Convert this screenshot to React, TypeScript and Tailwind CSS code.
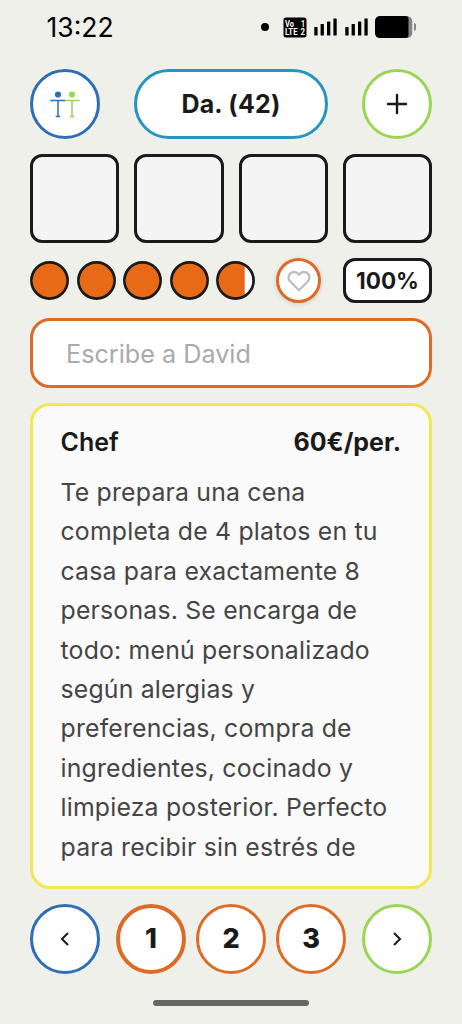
import type { ReactNode } from 'react';
import clsx from 'clsx';

const RATING = [100, 100, 100, 100, 78];
const PAGES = [1, 2, 3];

const DESCRIPTION =
  'Te prepara una cena completa de 4 platos en tu casa para exactamente 8 personas. Se encarga de todo: menú personalizado según alergias y preferencias, compra de ingredientes, cocinado y limpieza posterior. Perfecto para recibir sin estrés de';

function RoundButton({ label, className, children }: { label: string; className: string; children: ReactNode }) {
  return (
    <button
      aria-label={label}
      className={clsx('flex size-[70px] shrink-0 items-center justify-center rounded-full bg-white text-[#1a1a1a]', className)}
    >
      {children}
    </button>
  );
}

function Signal() {
  return (
    <svg width="23" height="18" viewBox="0 0 23 18" fill="#000">
      <rect x="0.3" y="9" width="3.3" height="8.5" rx="0.6" />
      <rect x="6.6" y="6" width="3.3" height="11.5" rx="0.6" />
      <rect x="13" y="3.6" width="3.3" height="13.9" rx="0.6" />
      <rect x="19.4" y="0.4" width="3.3" height="17.1" rx="0.6" />
    </svg>
  );
}

function StatusBar() {
  return (
    <div className="flex h-[54px] items-center px-[46px] text-black">
      <span className="pl-[0.5px] text-[26.5px] leading-[30px]">13:22</span>
      <div className="ml-auto flex items-center">
        <span className="mr-[14px] size-2 rounded-full bg-black" />
        <svg width="24" height="21" viewBox="0 0 24 21" className="mr-[7px] font-['Roboto',sans-serif] text-[9px] font-bold" fill="#fff">
          <rect x="0.5" y="0.5" width="23" height="20" rx="2.5" fill="#000" />
          <text x="2" y="9.5" textLength="9" lengthAdjust="spacingAndGlyphs">Vo</text>
          <text x="18" y="9.5" textLength="4" lengthAdjust="spacingAndGlyphs">1</text>
          <text x="2" y="18" textLength="12.500" lengthAdjust="spacingAndGlyphs">LTE</text>
          <text x="17.500" y="18" textLength="4.500" lengthAdjust="spacingAndGlyphs">2</text>
        </svg>
        <div className="mr-[7px] flex gap-[8px]">
          <Signal />
          <Signal />
        </div>
        <svg width="41" height="22" viewBox="0 0 41 22">
          <rect width="37.3" height="22" rx="5.5" fill="#858585" />
          <path d="M5.5 0H30.5Q33.5 0 33.5 3V19Q33.5 22 30.5 22H5.5Q0 22 0 16.5V5.5Q0 0 5.5 0Z" fill="#000" />
          <path d="M39 7Q41 7.5 41 9V13Q41 14.500 39 15Z" fill="#858585" />
        </svg>
      </div>
    </div>
  );
}

function PeopleIcon() {
  return (
    <svg width="30" height="28" viewBox="0 0 30 28">
      <g fill="#2f6db5" stroke="#2f6db5">
        <circle cx="8" cy="4.5" r="3.1" stroke="none" />
        <path d="M0.300 10.500H15M8 10.500V26.500M5.800 26.500H10.200" fill="none" strokeWidth="1.500" />
      </g>
      <g fill="#9bd555" stroke="#9bd555">
        <circle cx="22" cy="4.5" r="3.1" stroke="none" />
        <path d="M15 10.500H29.700M22 10.500V26.500M19.800 26.500H24.200" fill="none" strokeWidth="1.500" />
      </g>
    </svg>
  );
}

export default function App() {
  return (
    <div className="flex h-[1024px] w-[462px] flex-col overflow-hidden bg-[#eff0ea] font-['Inter',sans-serif] text-[#1a1a1a]">
      <StatusBar />

      <main className="flex flex-1 flex-col px-[30px] pt-[15px]">
        <header className="flex h-[70px] items-center justify-between">
          <RoundButton label="Inicio" className="border-[3px] border-[#2f6db5]">
            <PeopleIcon />
          </RoundButton>
          <button className="h-[70px] w-[194px] rounded-full border-[3px] border-[#2696c0] bg-white pt-[2px] text-[25px] font-bold tracking-[0.2px]">
            Da. (42)
          </button>
          <RoundButton label="Añadir" className="border-[3px] border-[#9bd555]">
            <svg width="22" height="22" viewBox="0 0 22 22" stroke="currentColor" strokeWidth="2.400" strokeLinecap="round">
              <path d="M11 2V20M2 11H20" />
            </svg>
          </RoundButton>
        </header>

        <section className="mt-[14.500px] grid grid-cols-4 gap-[15px]">
          {[0, 1, 2, 3].map((slot) => (
            <div key={slot} className="h-[89px] rounded-[12px] border-[3px] border-[#1a1a1a] bg-[#f4f4f4]" />
          ))}
        </section>

        <section className="mt-[15.500px] flex h-[45px] items-center">
          <div className="flex gap-[7.500px]">
            {RATING.map((fill, i) => (
              <svg key={i} width="39" height="39" viewBox="0 0 39 39">
                <clipPath id={`rating-${i}`}>
                  <rect x="3" y="0" width={(33 * fill) / 100} height="39" />
                </clipPath>
                <circle cx="19.5" cy="19.5" r="18" fill="#fff" />
                <circle cx="19.5" cy="19.5" r="18" fill="#e86a17" clipPath={`url(#rating-${i})`} />
                <circle cx="19.5" cy="19.5" r="18.1" fill="none" stroke="#1a1a1a" strokeWidth="2.700" />
              </svg>
            ))}
          </div>
          <button
            aria-label="Favorito"
            className="ml-[21px] flex size-[45px] items-center justify-center rounded-full border-[3px] border-[#dd6b27] bg-white shadow-[0_1px_5px_rgba(0,0,0,0.15)]"
          >
            <svg width="24" height="24" viewBox="0 0 24 24" fill="none" stroke="#bdbdbd" strokeWidth="2.300" strokeLinejoin="round">
              <path d="M20.840 4.610a5.500 5.500 0 0 0-7.780 0L12 5.670l-1.060-1.060a5.500 5.500 0 0 0-7.780 7.780l1.060 1.060L12 21.230l7.780-7.780 1.060-1.060a5.500 5.500 0 0 0 0-7.780z" />
            </svg>
          </button>
          <div className="ml-auto flex h-[45px] w-[89px] items-center justify-center rounded-[12px] border-[3px] border-[#1a1a1a] bg-white text-[22.500px] font-bold">
            100%
          </div>
        </section>

        <input
          placeholder="Escribe a David"
          className="mt-[14.500px] h-[70px] w-full shrink-0 rounded-[20px] border-[3px] border-[#dd6b27] bg-white px-[33px] pt-[2px] text-[25.200px] outline-none placeholder:text-[#aaaaaa]"
        />

        <article className="mt-[15px] h-[486px] shrink-0 overflow-hidden rounded-[20px] border-[3px] border-[#f2e750] bg-[#fafafa] pt-[18px] pr-[28px] pl-[27.500px]">
          <div className="flex items-center justify-between text-[25px] leading-[36px]">
            <h2 className="font-semibold">Chef</h2>
            <span className="font-bold">60€/per.</span>
          </div>
          <p className="mt-[13.500px] text-[24.800px] leading-[39.400px] tracking-[0.2px] text-[#444444]">{DESCRIPTION}</p>
        </article>

        <nav className="mt-[15.500px] flex h-[70px] shrink-0 items-center justify-between">
          <RoundButton label="Anterior" className="border-[3px] border-[#2f6db5]">
            <svg width="10" height="14" viewBox="0 0 10 14" fill="none" stroke="currentColor" strokeWidth="2">
              <path d="M8 1L2 7L8 13" />
            </svg>
          </RoundButton>
          <div className="flex gap-[10px]">
            {PAGES.map((page) => (
              <RoundButton
                key={page}
                label={`Página ${page}`}
                className={clsx('border-[#dd6b27] pt-px text-[27px] font-extrabold', page === 1 ? 'border-[4.500px]' : 'border-[3px]')}
              >
                {page}
              </RoundButton>
            ))}
          </div>
          <RoundButton label="Siguiente" className="border-[3px] border-[#9bd555]">
            <svg width="10" height="14" viewBox="0 0 10 14" fill="none" stroke="currentColor" strokeWidth="2">
              <path d="M2 1L8 7L2 13" />
            </svg>
          </RoundButton>
        </nav>

        <div className="mx-auto mt-[26px] h-[6px] w-[156px] shrink-0 rounded-full bg-[#666664]" />
      </main>
    </div>
  );
}
